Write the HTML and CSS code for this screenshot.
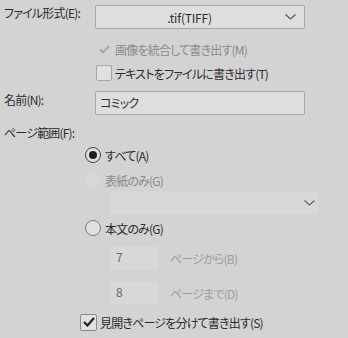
FILE: index.html
```html
<!DOCTYPE html>
<html lang="ja">
<head>
    <meta charset="UTF-8">
    <meta name="viewport" content="width=device-width, initial-scale=1.0">
    <title>書き出し設定</title>
    <link rel="stylesheet" href="styles.css">
</head>
<body>
    <div class="panel">
        <div class="row row-format">
            <label class="label">ファイル形式(E):</label>
            <div class="select">
                <span class="select-text">.tif(TIFF)</span>
                <svg class="chevron" width="11" height="6" viewBox="0 0 11 6"><polyline points="0.5,0.5 5.5,5 10.5,0.5" fill="none" stroke="#555" stroke-width="1.3"/></svg>
            </div>
        </div>

        <div class="row row-merge indent">
            <span class="check disabled">
                <svg width="11" height="9" viewBox="0 0 11 9"><polyline points="1,4.5 4,7.5 10,1" fill="none" stroke="#a9a9a9" stroke-width="2"/></svg>
            </span>
            <span class="text muted">画像を統合して書き出す(M)</span>
        </div>

        <div class="row row-text indent">
            <span class="check"></span>
            <span class="text">テキストをファイルに書き出す(T)</span>
        </div>

        <div class="row row-name">
            <label class="label label-name">名前(N):</label>
            <div class="input">コミック</div>
        </div>

        <div class="row row-range">
            <label class="label">ページ範囲(F):</label>
        </div>

        <div class="row row-all indent-radio">
            <span class="radio checked"></span>
            <span class="text">すべて(A)</span>
        </div>

        <div class="row row-cover indent-radio">
            <span class="radio disabled"></span>
            <span class="text muted">表紙のみ(G)</span>
        </div>

        <div class="row row-coversel indent-sub">
            <div class="select select-off">
                <span class="select-text"></span>
                <svg class="chevron" width="11" height="6" viewBox="0 0 11 6"><polyline points="0.5,0.5 5.5,5 10.5,0.5" fill="none" stroke="#666" stroke-width="1.3"/></svg>
            </div>
        </div>

        <div class="row row-body indent-radio">
            <span class="radio"></span>
            <span class="text">本文のみ(G)</span>
        </div>

        <div class="row row-from indent-sub">
            <div class="num">7</div>
            <span class="text faint">ページから(B)</span>
        </div>

        <div class="row row-to indent-sub">
            <div class="num">8</div>
            <span class="text faint">ページまで(D)</span>
        </div>

        <div class="row row-spread indent-spread">
            <span class="check on">
                <svg width="12" height="10" viewBox="0 0 12 10"><polyline points="1,5 4.5,8.5 11,1" fill="none" stroke="#222" stroke-width="2.2"/></svg>
            </span>
            <span class="text">見開きページを分けて書き出す(S)</span>
        </div>
    </div>
</body>
</html>
```

FILE: styles.css
```css
body {
    margin: 0;
    background: #d3d3d3;
    font-family: "Noto Sans CJK JP", "Noto Sans", sans-serif;
    font-size: 12px;
    font-feature-settings: "palt" 1;
    letter-spacing: -0.8px;
    color: #2c2c2c;
}

.panel {
    width: 348px;
    height: 338px;
    padding: 5px 0 0 4px;
    box-sizing: border-box;
    display: flex;
    flex-direction: column;
}

.row {
    display: flex;
    align-items: center;
    height: 24px;
}

.label {
    width: 91px;
    line-height: 16px;
    align-self: flex-start;
    white-space: nowrap;
}

.label-name {
    padding-top: 1px;
}

.indent { padding-left: 92px; }
.indent-radio { padding-left: 81px; }
.indent-sub { padding-left: 106px; }
.indent-spread { padding-left: 76px; }

.row-merge { margin-top: 8px; }
.row-name { margin-top: 6px; }
.row-range { margin-top: 8px; height: 20px; }
.row-range .label { line-height: 20px; }
.row-cover { margin-top: 2px; height: 22px; }
.row-coversel { height: 24px; }
.row-body { margin-top: 1px; }
.row-from { margin-top: 6px; }
.row-to { margin-top: 11px; }
.row-spread { margin-top: 5px; }

.select {
    width: 210px;
    height: 24px;
    box-sizing: border-box;
    border: 1px solid #a6a6a6;
    border-radius: 2px;
    background: #dedede;
    display: flex;
    align-items: center;
}

.select-text {
    flex: 1;
    text-align: center;
    padding-left: 2px;
    letter-spacing: -0.2px;
}

.chevron {
    margin: 0 8px 0 4px;
}

.select-off {
    width: 209px;
    border-color: #d6d6d6;
    background: #d8d8d8;
}

.select-off .chevron {
    margin-right: 3px;
}

.input {
    width: 210px;
    height: 24px;
    box-sizing: border-box;
    border: 1px solid #a6a6a6;
    border-radius: 2px;
    background: #dedede;
    padding-left: 4px;
    line-height: 21px;
}

.check {
    width: 16px;
    height: 16px;
    box-sizing: border-box;
    border: 1px solid #a6a6a6;
    border-radius: 2px;
    background: #e0e0e0;
    display: flex;
    align-items: center;
    justify-content: center;
    margin-right: 3px;
}

.check.disabled {
    border-color: #d3d3d3;
    background: #d3d3d3;
}

.check.on {
    width: 17px;
    height: 17px;
    border-color: #8a8a8a;
}

.radio {
    width: 16px;
    height: 16px;
    box-sizing: border-box;
    border: 1px solid #7c7c7c;
    border-radius: 50%;
    background: #e0e0e0;
    margin-right: 4px;
    display: flex;
    align-items: center;
    justify-content: center;
}

.radio.checked {
    border-color: #444;
}

.radio.checked::after {
    content: "";
    width: 8px;
    height: 8px;
    border-radius: 50%;
    background: #1e1e1e;
}

.radio.disabled {
    border-color: #d8d8d8;
    background: #d8d8d8;
}

.text {
    white-space: nowrap;
}

.muted { color: #8a8a8a; }
.faint { color: #9c9c9c; }

.num {
    width: 49px;
    height: 24px;
    box-sizing: border-box;
    border: 1px solid #d5d5d5;
    background: #d8d8d8;
    color: #666;
    padding-left: 5px;
    line-height: 20px;
    margin-right: 11px;
    letter-spacing: 0;
}
```
